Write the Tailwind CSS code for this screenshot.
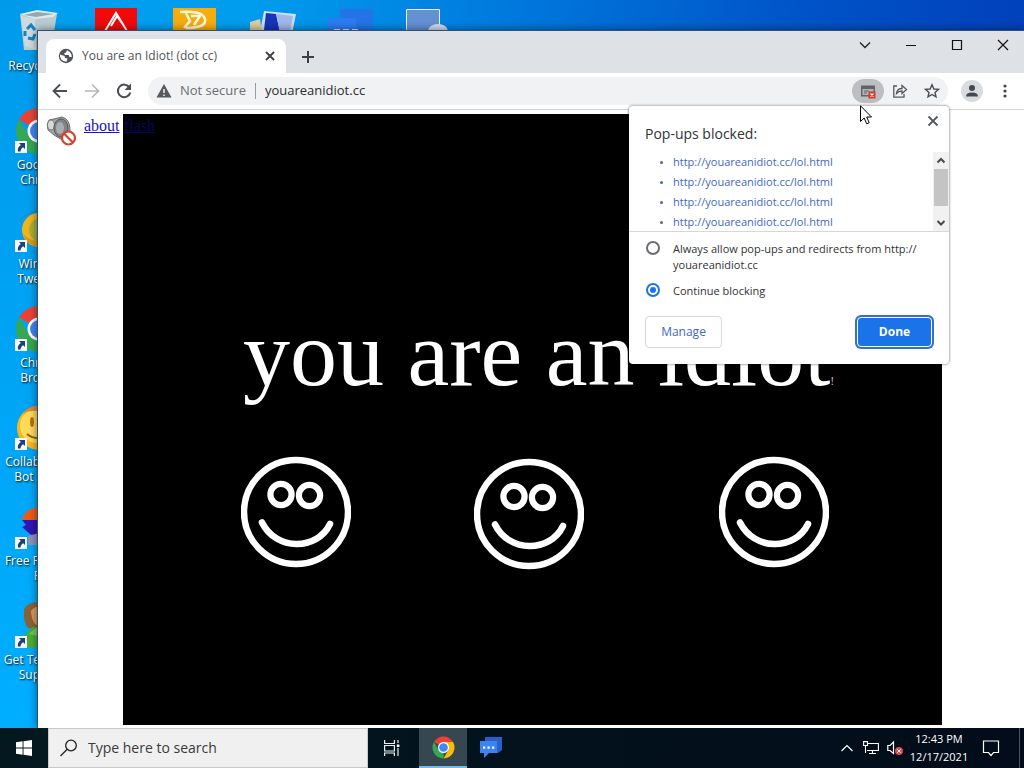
<!DOCTYPE html>
<html lang="en">
<head>
    <meta charset="UTF-8">
    <meta name="viewport" content="width=device-width, initial-scale=1.0">
    <title>You are an Idiot! (dot cc)</title>
    <script src="https://cdn.jsdelivr.net/npm/@tailwindcss/browser@4"></script>
</head>
<body class="h-screen flex flex-col overflow-hidden font-['Open_Sans',sans-serif] text-xs text-[#3c4043]">

    <!-- shared icon parts -->
    <svg class="hidden">
        <symbol id="chrome" viewBox="0 0 48 48">
            <path fill="#ea4335" d="M24 24 4.100 12.500A23 23 0 0 1 43.900 12.500H24z"/>
            <path fill="#34a853" d="M24 24 24 47A23 23 0 0 1 4.100 12.500L14 29.800z"/>
            <path fill="#fbbc05" d="M24 12.500H43.900A23 23 0 0 1 24 47L34 29.800z"/>
            <circle cx="24" cy="24" r="11.500" fill="#fff"/>
            <circle cx="24" cy="24" r="9" fill="#4285f4"/>
        </symbol>
        <symbol id="shortcut" viewBox="0 0 12 12">
            <path fill="#f4f7fb" d="M0 0h12v12H0z"/>
            <path fill="#1d3f7d" d="M4 2h6v6L8.200 6.200C6.500 7.300 5.600 8.600 5.500 10.500H3C2.300 7.500 3.600 5.500 5.900 4z"/>
        </symbol>
        <symbol id="smiley" viewBox="0 0 110 112" fill="none" stroke="#fff">
            <ellipse cx="55" cy="56" rx="52" ry="52" stroke-width="6.500"/>
            <circle cx="40" cy="38.500" r="10.600" stroke-width="6.200"/>
            <circle cx="68.500" cy="39.500" r="10.600" stroke-width="6.200"/>
            <path d="M21 66.500C35 95 76 95 89 68" stroke-width="6.500" stroke-linecap="round"/>
        </symbol>
    </svg>

    <!-- desktop -->
    <main class="relative flex-1 overflow-hidden bg-[linear-gradient(100deg,#00a0f0_0%,#009cee_22%,#0078dc_45%,#0053c8_70%,#0036b4_100%)]">
        <div class="absolute inset-y-0 left-0 w-[38px] bg-linear-to-b from-[#009aeb] to-[#00aeff]"></div>

        <div class="relative flex text-white text-shadow-[1px_1px_2px_#000]">
            <div class="w-[78px] leading-[15px]">
                <div class="h-[99px] pt-2 flex flex-col gap-[2px]">
                    <svg class="size-12 mx-auto" viewBox="0 0 48 48">
                        <path fill="#b9ccd4" d="M5 6 42 6 36 42 9 42z"/>
                        <path fill="#dfe9ec" d="M5 6 22 2 43 5 38 9 20 11z"/>
                        <path fill="#93a9b2" d="M9 7 22 4 39 6 21 9z"/>
                        <path fill="#cddbe0" d="M6 8 20 11 21 42 10 38z"/>
                        <path fill="none" stroke="#1a7fc4" stroke-width="3" d="M12 21 16 17 20 22M20 26 18 31 13 30M10 28 10 23"/>
                    </svg>
                    <p class="pr-[38px] text-right">Recyc</p>
                </div>
                <div class="h-[99px] pt-2 flex flex-col gap-[2px]">
                    <svg class="size-12 mx-auto" viewBox="0 0 48 48">
                        <use href="#chrome" width="48" height="48"/>
                        <use href="#shortcut" y="34" width="12" height="12"/>
                    </svg>
                    <p class="pr-[38px] text-right">Goo<br>Chr</p>
                </div>
                <div class="h-[99px] pt-2 flex flex-col gap-[2px]">
                    <svg class="size-12 mx-auto" viewBox="0 0 48 48">
                        <path fill="none" stroke="#3b7da6" stroke-width="1" d="M4 16Q12 5 24 5"/>
                        <circle cx="24" cy="24" r="17" fill="#f0b41c"/>
                        <circle cx="26" cy="24" r="12" fill="#a9ad3c"/>
                        <path fill="#d99a12" d="M8 28Q12 40 24 41V36Q14 34 8 28z"/>
                        <use href="#shortcut" y="34" width="12" height="12"/>
                    </svg>
                    <p class="pr-[38px] text-right">Win<br>Twe</p>
                </div>
                <div class="h-[99px] pt-2 flex flex-col gap-[2px]">
                    <svg class="size-12 mx-auto" viewBox="0 0 48 48">
                        <use href="#chrome" width="48" height="48"/>
                        <use href="#shortcut" y="34" width="12" height="12"/>
                    </svg>
                    <p class="pr-[38px] text-right">Chr<br>Bro</p>
                </div>
                <div class="h-[99px] pt-2 flex flex-col gap-[2px]">
                    <svg class="size-12 mx-auto" viewBox="0 0 48 48">
                        <circle cx="24" cy="24" r="22" fill="#f9b61e"/>
                        <circle cx="22" cy="22" r="17" fill="#fddc5a"/>
                        <path fill="#e7852a" d="M8 10Q14 1 24 2V7Q14 6 8 10z"/>
                        <ellipse cx="17" cy="18" rx="2" ry="5" fill="#b87314"/>
                        <path fill="none" stroke="#9a5a10" stroke-width="2" d="M12 30Q18 35 26 34"/>
                        <use href="#shortcut" y="34" width="12" height="12"/>
                    </svg>
                    <p class="pr-[38px] text-right">Collab<br>Bot I</p>
                </div>
                <div class="h-[99px] pt-2 flex flex-col gap-[2px]">
                    <svg class="size-12 mx-auto" viewBox="0 0 48 48">
                        <path fill="#ee5b17" d="M7 17Q9 6 24 4V18z"/>
                        <path fill="#3016b4" d="M7 17H24V36L15 31 7 24 11 22z"/>
                        <path fill="#8f93b8" d="M13 33 24 30V42H13z"/>
                        <use href="#shortcut" y="34" width="12" height="12"/>
                    </svg>
                    <p class="pr-[38px] text-right">Free R<br>F</p>
                </div>
                <div class="h-[99px] pt-2 flex flex-col gap-[2px]">
                    <svg class="size-12 mx-auto" viewBox="0 0 48 48">
                        <path fill="#8a6238" d="M9 8Q12 0 24 0V26H13Q8 20 9 8z"/>
                        <path fill="#d89a5c" d="M16 9Q20 4 24 5V24Q17 23 16 9z"/>
                        <path fill="#4cae35" d="M5 45Q8 32 19 24L24 28V46z"/>
                        <path fill="#7cc95c" d="M14 32 22 25 24 27V34z"/>
                        <use href="#shortcut" y="34" width="12" height="12"/>
                    </svg>
                    <p class="pr-[38px] text-right">Get Te<br>Sup</p>
                </div>
            </div>
            <svg class="w-[78px] h-12 mt-2" viewBox="0 0 78 48">
                <path fill="#f10a0a" d="M17 0h42v42H17z"/>
                <path fill="none" stroke="#fff" stroke-width="2" d="M27 23 38 5 49 23M33 18 39 8 46 18"/>
            </svg>
            <svg class="w-[78px] h-12 mt-2" viewBox="0 0 78 48">
                <path fill="#f5ad0e" d="M17 0h43v42H17z"/>
                <path fill="none" stroke="#fff6d8" stroke-width="2.500" d="M24 4Q47 2 49 11T30 20M30 5 34 13 28 20M35 8H44L38 17"/>
            </svg>
            <svg class="w-[78px] h-12 mt-2" viewBox="0 0 78 48">
                <path fill="#d4dbe6" d="M30 3 62 6 58 26 26 24z"/>
                <path fill="#1534b8" d="M32 5 42 6 46 24 30 22z"/>
                <path fill="#9fb7ea" d="M42 6 59 8 56 24 46 24z"/>
                <path fill="#d9cda4" d="M16 14 26 11 28 24H16z"/>
            </svg>
            <svg class="w-[78px] h-12 mt-2" viewBox="0 0 78 48">
                <path fill="#2474e8" d="M28 1h33v34H28z"/>
                <path fill="#2b7bf3" d="M16 10h28v24H16z"/>
                <path stroke="#dce8ff" stroke-width="2" stroke-dasharray="6 3" d="M22 22h24"/>
            </svg>
            <svg class="w-[78px] h-12 mt-2" viewBox="0 0 78 48">
                <path fill="#6490d4" stroke="#e8f1fb" stroke-width="1" d="M16.500 1.500h33v34h-33z"/>
                <ellipse cx="48" cy="23" rx="10" ry="7" fill="#cfdcf0"/>
            </svg>
        </div>

        <!-- browser window -->
        <section class="absolute left-[37px] top-[30px] right-0 bottom-0 flex flex-col border-l border-t border-[#35506b] bg-white shadow-[0_0_8px_rgba(0,0,0,0.5)]">
            <header class="h-[42px] shrink-0 flex bg-[#dee1e5]">
                <div class="ml-2 mt-2 w-60 h-[34px] pl-3 pr-2 flex items-center rounded-t-lg bg-white">
                    <svg class="size-4 mr-2" viewBox="0 0 16 16">
                        <circle cx="8" cy="8" r="7.200" fill="#505357"/>
                        <path fill="#fff" d="M2 6.500 6.500 8 7 10 9.500 10.500 8.500 13.800Q3 13.500 2 8.500zM9 2.200 8 4.500 6 5.500 7 7H10.500L11.500 9H13.800Q14 4.500 9 2.200z"/>
                    </svg>
                    <span class="flex-1 whitespace-nowrap text-[#505357]">You are an Idiot! (dot cc)</span>
                    <button class="size-4" aria-label="Close tab">
                        <svg class="size-4" viewBox="0 0 16 16" stroke="#3c4043" stroke-width="1.800"><path d="M4 4 12 12M12 4 4 12"/></svg>
                    </button>
                </div>
                <button class="ml-3 mt-4 size-5" aria-label="New tab">
                    <svg class="size-5" viewBox="0 0 20 20" stroke="#3c4043" stroke-width="2"><path d="M10 4V16M4 10H16"/></svg>
                </button>
                <div class="ml-auto -mr-[2px] h-7 flex">
                    <button class="w-[46px] flex justify-center items-center" aria-label="Search tabs">
                        <svg class="size-3" viewBox="0 0 12 12" fill="none" stroke="#222" stroke-width="1.300"><path d="M1 3.500 6 8.500 11 3.500"/></svg>
                    </button>
                    <button class="w-[46px] flex justify-center items-center" aria-label="Minimize">
                        <svg class="size-3" viewBox="0 0 12 12" stroke="#111"><path d="M1 6.500H11"/></svg>
                    </button>
                    <button class="w-[46px] flex justify-center items-center" aria-label="Maximize">
                        <svg class="size-3" viewBox="0 0 12 12" fill="none" stroke="#111" stroke-width="1.200"><path d="M1.500 1.500h9v9h-9z"/></svg>
                    </button>
                    <button class="w-[46px] flex justify-center items-center" aria-label="Close">
                        <svg class="size-3" viewBox="0 0 12 12" stroke="#111" stroke-width="1.200"><path d="M1 1 11 11M11 1 1 11"/></svg>
                    </button>
                </div>
            </header>

            <nav class="h-[37px] shrink-0 pl-3 pr-[9px] flex items-center border-b border-[#d5d7da]">
                <button class="size-5 mr-3" aria-label="Back">
                    <svg class="size-5" viewBox="0 0 20 20" fill="none" stroke="#4a4d51" stroke-width="1.800"><path d="M17 10H4M10 3.500 3.500 10 10 16.500"/></svg>
                </button>
                <button class="size-5 mr-3" aria-label="Forward">
                    <svg class="size-5" viewBox="0 0 20 20" fill="none" stroke="#b4b6b9" stroke-width="1.600"><path d="M3 10H16M10 3.500 16.500 10 10 16.500"/></svg>
                </button>
                <button class="size-5 mr-[14px]" aria-label="Reload">
                    <svg class="size-5" viewBox="0 0 20 20"><path fill="none" stroke="#4a4d51" stroke-width="2" d="M15.500 6.500A6.300 6.300 0 1 0 16.300 11.500"/><path fill="#4a4d51" d="M17 2.500V9H10.500z"/></svg>
                </button>
                <div class="flex-1 h-7 px-2 flex items-center rounded-full bg-[#f1f2f3] text-[13px]">
                    <svg class="size-4 mr-2" viewBox="0 0 16 16"><path fill="#55585c" d="M8 1 15.500 14.500H.5z"/><path stroke="#f1f2f3" stroke-width="1.500" d="M8 6V10M8 11.500V13"/></svg>
                    <span class="whitespace-nowrap text-[#6a6d70]">Not secure</span>
                    <span class="mx-[9px] w-px h-4 bg-[#9a9da0]"></span>
                    <input class="flex-1 min-w-0 outline-none text-[#2a2c2f]" aria-label="Address" value="youareanidiot.cc">
                    <button class="w-8 h-6 mr-2 flex justify-center items-center rounded-full bg-[#bcbec1]" aria-label="Pop-ups blocked">
                        <svg class="size-4" viewBox="0 0 16 16"><path fill="#5f6368" d="M1 2.500h14v11H1z"/><path fill="#b4b6b9" d="M2.500 6h11v6h-11z"/><path stroke="#5f6368" d="M4 8h5M4 10h3"/><path fill="#d93a26" d="M8.500 8.500H15.500V15.500H8.500z"/><path stroke="#fff" stroke-width="1.200" d="M10.500 10.500l3 3M13.500 10.500l-3 3"/></svg>
                    </button>
                    <button class="size-4 mr-4" aria-label="Share">
                        <svg class="size-4" viewBox="0 0 16 16" fill="none" stroke="#55585c" stroke-width="1.300"><path d="M5 3H1.800V14.200H12V11M4.500 10.500Q5 5.500 10 5.500V2.500L14.500 6.500 10 10.500V8Q6.500 8 4.500 10.500z"/></svg>
                    </button>
                    <button class="size-4" aria-label="Bookmark">
                        <svg class="size-4" viewBox="0 0 16 16" fill="none" stroke="#4a4d51" stroke-width="1.400"><path d="M8 1.800 9.900 6 14.400 6.400 11 9.400 12 13.900 8 11.500 4 13.900 5 9.400 1.600 6.400 6.100 6z"/></svg>
                    </button>
                </div>
                <button class="ml-[13px] size-[22px] rounded-full bg-[#d8dbe0]" aria-label="Profile">
                    <svg class="size-[22px]" viewBox="0 0 22 22" fill="#43474f"><circle cx="11" cy="8" r="3"/><path d="M5 16.500Q5 12.500 11 12.500T17 16.500z"/></svg>
                </button>
                <button class="ml-3 size-5" aria-label="Menu">
                    <svg class="size-5" viewBox="0 0 20 20" fill="#43474a"><circle cx="10" cy="5" r="1.600"/><circle cx="10" cy="10" r="1.600"/><circle cx="10" cy="15" r="1.600"/></svg>
                </button>
            </nav>

            <!-- page -->
            <article class="flex-1 min-h-0 flex pt-1 pb-[3px] font-['Liberation_Serif',serif] text-base">
                <div class="w-[85px] shrink-0 pl-2 flex items-start gap-2">
                    <svg class="w-[30px] h-[30px] mt-[2px]" viewBox="0 0 30 30">
                        <path fill="#a2a2a2" stroke="#6c6c6c" d="M3 4 8 3 16 1Q24 3 24 14T18 25L8 19 2 14Q0 8 3 4z"/>
                        <ellipse cx="5" cy="9" rx="3.500" ry="5" fill="#d8d8d8" stroke="#777"/>
                        <ellipse cx="15" cy="12" rx="7" ry="9" fill="#808387" stroke="#555"/>
                        <ellipse cx="14" cy="12" rx="4" ry="6" fill="#a9adb1"/>
                        <circle cx="22.500" cy="22" r="6.500" fill="#fff" stroke="#d2452f" stroke-width="2.200"/>
                        <path stroke="#d2452f" stroke-width="2.200" d="M18 17.500 27 26.500"/>
                    </svg>
                    <a href="#about" class="text-[#1a12c4] underline">about</a>
                </div>
                <div class="relative flex-1 min-w-0 bg-black text-white">
                    <a href="#flash" class="absolute left-px top-0 text-[#06065c] underline">flash</a>
                    <h1 class="absolute left-[120px] top-[185px] whitespace-nowrap text-[94px] leading-[108px]">you are an idiot<span class="text-xs text-[#bbb]">!</span></h1>
                    <svg class="absolute left-[118px] top-[342px] w-[110px] h-28"><use href="#smiley"/></svg>
                    <svg class="absolute left-[351px] top-[344px] w-[110px] h-28"><use href="#smiley"/></svg>
                    <svg class="absolute left-[596px] top-[342px] w-[110px] h-28"><use href="#smiley"/></svg>
                </div>
                <div class="w-[82px] shrink-0"></div>
            </article>
        </section>

        <!-- blocked pop-ups bubble -->
        <form class="absolute right-[75px] top-[106px] w-80 h-[258px] flex flex-col rounded bg-white shadow-[0_0_2px_1px_rgba(0,0,0,0.3)]">
            <div class="h-[46px] pl-4 flex justify-between">
                <h2 class="mt-[18px] text-sm leading-5 text-[#303236]">Pop-ups blocked:</h2>
                <button type="button" class="size-4 mt-[7px] mr-2" aria-label="Close bubble">
                    <svg class="size-4" viewBox="0 0 16 16" stroke="#55585c" stroke-width="1.800"><path d="M3.500 3.500 12.500 12.500M12.500 3.500 3.500 12.500"/></svg>
                </button>
            </div>
            <div class="h-20 flex border-b border-[#d5d7da] overflow-hidden">
                <ul class="flex-1 pl-11 list-disc text-[11px] leading-5 text-[#3f68c4] marker:text-[8px]">
                    <li><a href="#lol">http://youareanidiot.cc/lol.html</a></li>
                    <li><a href="#lol">http://youareanidiot.cc/lol.html</a></li>
                    <li><a href="#lol">http://youareanidiot.cc/lol.html</a></li>
                    <li><a href="#lol">http://youareanidiot.cc/lol.html</a></li>
                </ul>
                <div class="w-4 flex flex-col items-center bg-[#f1f1f1]">
                    <svg class="w-4 h-[17px]" viewBox="0 0 16 17" fill="none" stroke="#4a4a4a" stroke-width="2"><path d="M4.500 10.500 8 7 11.500 10.500"/></svg>
                    <div class="w-[14px] h-[37px] bg-[#c4c4c4]"></div>
                    <svg class="w-4 h-[17px] mt-auto" viewBox="0 0 16 17" fill="none" stroke="#4a4a4a" stroke-width="2"><path d="M4.500 7 8 10.500 11.500 7"/></svg>
                </div>
            </div>
            <label class="mt-[9px] pl-[17px] pr-4 flex gap-[13px] text-[11px] leading-4 text-[#303236]">
                <input type="radio" name="popups" class="appearance-none shrink-0 size-[14px] rounded-full border-2 border-[#6a6d70] bg-white">
                <span>Always allow pop-ups and redirects from http://<wbr>youareanidiot.cc</span>
            </label>
            <label class="mt-[10px] pl-[17px] flex gap-[13px] text-[11px] leading-4 text-[#303236]">
                <input type="radio" name="popups" checked class="appearance-none shrink-0 size-[14px] p-[2px] rounded-full border-2 border-[#1a73e8] bg-[#1a73e8] bg-clip-content">
                <span>Continue blocking</span>
            </label>
            <div class="mt-auto mb-4 pl-4 pr-[17px] flex justify-between items-center">
                <button type="button" class="w-[77px] h-8 rounded border border-[#d5d7da] font-medium text-[#3f68c4]">Manage</button>
                <button type="button" class="w-[75px] h-[30px] rounded border border-white bg-[#1a73e8] font-bold text-white ring-2 ring-[#2f73cf]">Done</button>
            </div>
        </form>

        <!-- mouse pointer -->
        <svg class="absolute left-[860px] top-[105px] w-3 h-5" viewBox="0 0 12 20">
            <path fill="#fff" stroke="#000" d="M.5.8V16.500L4.200 13 6.700 18.800 9.200 17.700 6.700 12H11.500z"/>
        </svg>
    </main>

    <!-- taskbar -->
    <footer class="h-10 shrink-0 flex bg-linear-to-r from-[#04181f] to-[#020c1a] text-white">
        <button class="w-12 flex justify-center items-center" aria-label="Start">
            <svg class="size-4" viewBox="0 0 16 16" fill="#fff"><path d="M0 2.300 6.600 1.300V7.500H0zM7.500 1.200 16 0V7.500H7.500zM0 8.500H6.600V14.700L0 13.700zM7.500 8.500H16V16L7.500 14.800z"/></svg>
        </button>
        <label class="w-80 h-full pl-[11px] flex items-center border border-[#c6c8ca] bg-[#f0f0f0]">
            <svg class="size-[18px] mr-[10px]" viewBox="0 0 18 18" fill="none" stroke="#222" stroke-width="1.300"><circle cx="11" cy="6.500" r="5.300"/><path d="M7.200 10.300.5 17"/></svg>
            <input type="text" class="flex-1 min-w-0 outline-none text-sm text-[#3a3a3a] placeholder:text-[#3a3a3a]" placeholder="Type here to search" aria-label="Search">
        </label>
        <button class="w-[51px] flex justify-center items-center" aria-label="Task view">
            <svg class="w-4 h-4 -ml-1" viewBox="0 0 16 16" fill="none" stroke="#e8eef2" stroke-width="1.200"><path d="M.6 0V3.500H10.400V0M.6 5.500H10.400V11H.6zM.6 16V13H10.400V16M14 0V3M14 8V16"/><path fill="#fff" stroke="none" d="M12.800 4.500h2.600v2.500h-2.600z"/></svg>
        </button>
        <button class="w-12 flex justify-center items-center border-b-2 border-[#76b9ed] bg-[#37474f]" aria-label="Chrome">
            <svg class="size-[23px]"><use href="#chrome"/></svg>
        </button>
        <button class="w-12 flex justify-center items-center" aria-label="Chat">
            <svg class="w-6 h-[22px]" viewBox="0 0 24 22"><path fill="#2660c8" d="M6 0H23V13L19 16H6z"/><path fill="#3c83f4" d="M1 4H18V16H10L5 21V16H1z"/><path fill="#fff" d="M4 9.500h2.200v2.200H4zM8.500 9.500h2.200v2.200H8.500zM13 9.500h2.200v2.200H13z"/></svg>
        </button>
        <div class="ml-auto flex items-center">
            <svg class="w-3 h-3 mr-[10px]" viewBox="0 0 12 12" fill="none" stroke="#fff" stroke-width="1.200"><path d="M.5 9 6 3.500 11.500 9"/></svg>
            <svg class="w-4 h-4 mr-2" viewBox="0 0 16 16" fill="none" stroke="#fff" stroke-width="1.100"><path d="M5 3.500H15.400V10.500H4M.6 1.600H4.500V5.500H.6zM2.500 5.500V13M9.500 10.500V13.500M6 13.500H13"/></svg>
            <svg class="w-4 h-4 mr-[6px]" viewBox="0 0 16 16"><path fill="none" stroke="#fff" stroke-width="1.200" d="M.8 5.500H3L6.500 2V13.500L3 10.500H.8z"/><circle cx="12" cy="11" r="4" fill="#dc4a50"/><path stroke="#fff" d="M10.300 9.300l3.400 3.400M13.700 9.300l-3.400 3.400"/></svg>
            <div class="w-[60px] whitespace-nowrap text-center text-[11px] leading-[18px]">12:43 PM<br>12/17/2021</div>
            <button class="ml-[13px] mr-[19px] size-[18px]" aria-label="Notifications">
                <svg class="size-[18px]" viewBox="0 0 18 18" fill="none" stroke="#fff" stroke-width="1.200"><path d="M1.500 2H16.500V13.500H11.500L9 16.500 6.500 13.500H1.500z"/></svg>
            </button>
            <span class="w-[5px] h-10 border-l border-[#4b5560]"></span>
        </div>
    </footer>
</body>
</html>
